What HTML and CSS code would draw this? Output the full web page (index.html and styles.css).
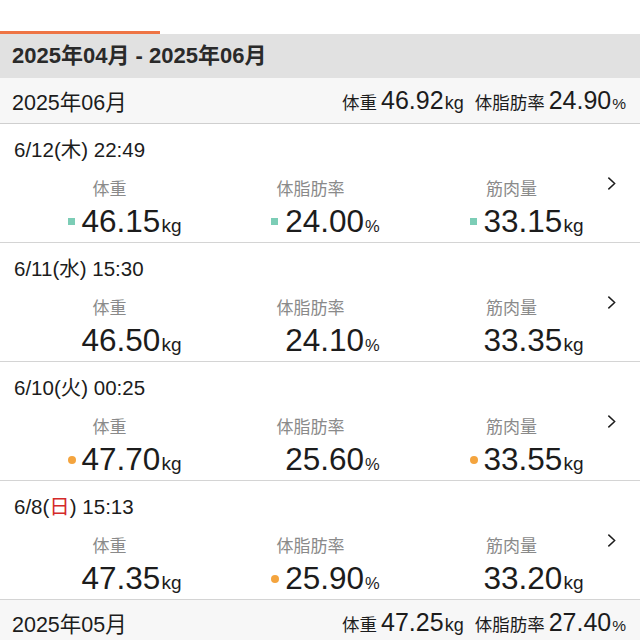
FILE: index.html
```html
<!DOCTYPE html>
<html lang="ja">
<head>
    <meta charset="UTF-8">
    <title>体組成 履歴</title>
    <link rel="stylesheet" href="styles.css">
</head>
<body>
    <div class="tabs">
        <div class="tab-indicator"></div>
    </div>

    <div class="range">2025年04月 - 2025年06月</div>

    <div class="month">
        <span class="month-name">2025年06月</span>
        <span class="summary">
            <span class="s-label">体重</span><span class="s-num">46.92</span><span class="s-unit">kg</span>
            <span class="s-label gap">体脂肪率</span><span class="s-num">24.90</span><span class="s-unit pct">%</span>
        </span>
    </div>

    <div class="entry">
        <div class="date">6/12(木) 22:49</div>
        <div class="cols">
            <div class="col">
                <div class="label">体重</div>
                <div class="value"><i class="mark square"></i>46.15<span class="unit">kg</span></div>
            </div>
            <div class="col">
                <div class="label">体脂肪率</div>
                <div class="value"><i class="mark square"></i>24.00<span class="unit pct">%</span></div>
            </div>
            <div class="col">
                <div class="label">筋肉量</div>
                <div class="value"><i class="mark square"></i>33.15<span class="unit">kg</span></div>
            </div>
        </div>
        <svg class="chevron" viewBox="0 0 10 16"><path d="M1.5 1.5 L8.5 8 L1.5 14.5" /></svg>
    </div>

    <div class="entry">
        <div class="date">6/11(水) 15:30</div>
        <div class="cols">
            <div class="col">
                <div class="label">体重</div>
                <div class="value">46.50<span class="unit">kg</span></div>
            </div>
            <div class="col">
                <div class="label">体脂肪率</div>
                <div class="value">24.10<span class="unit pct">%</span></div>
            </div>
            <div class="col">
                <div class="label">筋肉量</div>
                <div class="value">33.35<span class="unit">kg</span></div>
            </div>
        </div>
        <svg class="chevron" viewBox="0 0 10 16"><path d="M1.5 1.5 L8.5 8 L1.5 14.5" /></svg>
    </div>

    <div class="entry">
        <div class="date">6/10(火) 00:25</div>
        <div class="cols">
            <div class="col">
                <div class="label">体重</div>
                <div class="value"><i class="mark dot"></i>47.70<span class="unit">kg</span></div>
            </div>
            <div class="col">
                <div class="label">体脂肪率</div>
                <div class="value">25.60<span class="unit pct">%</span></div>
            </div>
            <div class="col">
                <div class="label">筋肉量</div>
                <div class="value"><i class="mark dot"></i>33.55<span class="unit">kg</span></div>
            </div>
        </div>
        <svg class="chevron" viewBox="0 0 10 16"><path d="M1.5 1.5 L8.5 8 L1.5 14.5" /></svg>
    </div>

    <div class="entry">
        <div class="date">6/8(<span class="sun">日</span>) 15:13</div>
        <div class="cols">
            <div class="col">
                <div class="label">体重</div>
                <div class="value">47.35<span class="unit">kg</span></div>
            </div>
            <div class="col">
                <div class="label">体脂肪率</div>
                <div class="value"><i class="mark dot"></i>25.90<span class="unit pct">%</span></div>
            </div>
            <div class="col">
                <div class="label">筋肉量</div>
                <div class="value">33.20<span class="unit">kg</span></div>
            </div>
        </div>
        <svg class="chevron" viewBox="0 0 10 16"><path d="M1.5 1.5 L8.5 8 L1.5 14.5" /></svg>
    </div>

    <div class="month">
        <span class="month-name">2025年05月</span>
        <span class="summary">
            <span class="s-label">体重</span><span class="s-num">47.25</span><span class="s-unit">kg</span>
            <span class="s-label gap">体脂肪率</span><span class="s-num">27.40</span><span class="s-unit pct">%</span>
        </span>
    </div>
</body>
</html>
```

FILE: styles.css
```css
:root {
    --accent: #ee7444;
    --text: #1c1c1c;
    --muted: #8a8a8a;
    --line: #d4d4d4;
}

body {
    margin: 0;
    background: #ffffff;
    color: var(--text);
    font-family: 'Liberation Sans', 'Noto Sans CJK JP', sans-serif;
    overflow: hidden;
}

.tabs {
    height: 34px;
    display: flex;
    align-items: flex-end;
}

.tab-indicator {
    width: 160px;
    height: 3px;
    background: var(--accent);
}

.range {
    height: 44px;
    line-height: 44px;
    padding: 0 12px;
    background: #e1e1e1;
    font-size: 22px;
    font-weight: bold;
    color: #2a2a2a;
}

.month {
    height: 45px;
    padding: 0 12px;
    background: #f7f7f7;
    border-bottom: 1px solid #cfcfcf;
    display: flex;
    justify-content: space-between;
    align-items: center;
}

.month-name {
    font-size: 21.5px;
}

.summary {
    display: flex;
    align-items: baseline;
    padding-right: 2px;
}

.s-label {
    font-size: 17.5px;
    margin-right: 4px;
}

.s-label.gap {
    margin-left: 11px;
}

.s-num {
    font-size: 25px;
}

.s-unit {
    font-size: 18px;
    margin-left: 1px;
}

.s-unit.pct {
    font-size: 15.5px;
}

.entry {
    position: relative;
    height: 118px;
    border-bottom: 1px solid var(--line);
    padding-left: 14px;
    box-sizing: content-box;
}

.date {
    padding-top: 15px;
    font-size: 20.5px;
    line-height: 22px;
}

.sun {
    color: #d42a2a;
}

.cols {
    display: grid;
    grid-template-columns: repeat(3, 201px);
    margin-left: 17px;
    margin-top: 18px;
}

.col {
    text-align: center;
}

.label {
    font-size: 17px;
    line-height: 22px;
    color: var(--muted);
    padding-right: 44px;
}

.value {
    position: relative;
    display: inline-block;
    margin-top: 2px;
    font-size: 31.5px;
    line-height: 36px;
}

.unit {
    font-size: 19px;
    margin-left: 1px;
}

.unit.pct {
    font-size: 16.5px;
}

.mark {
    position: absolute;
    left: -14px;
    top: 15px;
    width: 7px;
    height: 7px;
}

.mark.square {
    background: #7ccdb6;
}

.mark.dot {
    width: 8px;
    height: 8px;
    left: -14px;
    border-radius: 50%;
    background: #f4a43e;
}

.chevron {
    position: absolute;
    right: 24px;
    top: 52px;
    width: 9px;
    height: 15px;
    fill: none;
    stroke: #1c1c1c;
    stroke-width: 1.6;
}
```
